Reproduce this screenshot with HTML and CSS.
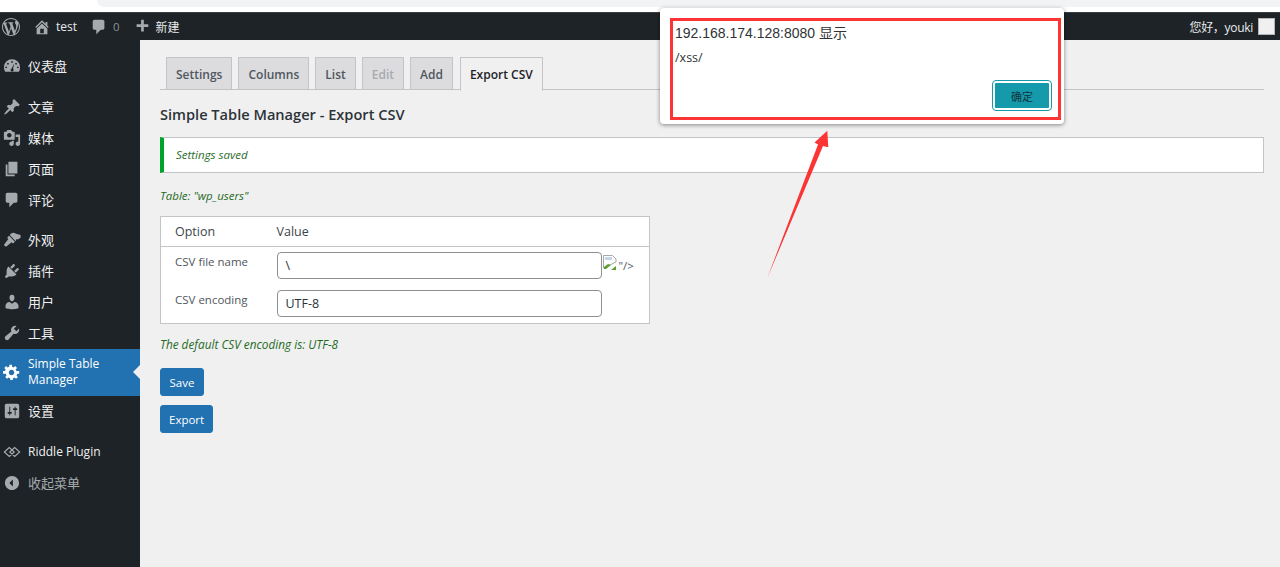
FILE: index.html
```html
<!DOCTYPE html>
<html lang="zh">
<head>
<meta charset="utf-8">
<title>Simple Table Manager - Export CSV</title>
<link rel="stylesheet" href="styles.css">
</head>
<body>
<div class="browser-strip"><div class="browser-tab"></div></div>
<header class="adminbar">
  <div class="bar-group">
    <svg class="wp-logo" viewBox="0 0 20 20"><path fill="#a7aaad" d="M20 10c0-5.510-4.490-10-10-10C4.480 0 0 4.490 0 10c0 5.520 4.480 10 10 10 5.510 0 10-4.480 10-10zM7.780 15.370L4.370 6.220c.55-.02 1.170-.08 1.170-.08.5-.06.44-1.130-.06-1.110 0 0-1.450.11-2.370.11-.18 0-.37 0-.58-.01C4.120 2.690 6.890 1 10 1c2.320 0 4.430.89 6.010 2.340-.68-.11-1.650.39-1.650 1.580 0 .74.45 1.360.9 2.100.35.61.55 1.360.55 2.460 0 1.490-1.400 5-1.400 5l-3.030-8.370c.54-.02.82-.17.82-.17.5-.05.44-1.250-.06-1.220 0 0-1.440.12-2.380.12-.87 0-2.330-.12-2.330-.12-.5-.03-.56 1.200-.06 1.220l.92.08 1.260 3.410zM17.410 10c.24-.64.74-1.870.43-4.250.7 1.290 1.050 2.710 1.050 4.250 0 3.290-1.730 6.240-4.400 7.780.97-2.590 1.940-5.200 2.920-7.780zM6.100 18.090C3.120 16.650 1.110 13.530 1.110 10c0-1.300.23-2.480.72-3.590C3.250 10.300 4.670 14.200 6.100 18.090zm4.030-6.630l2.580 6.980c-.86.29-1.760.45-2.710.45-.79 0-1.570-.11-2.290-.33.81-2.380 1.620-4.740 2.420-7.100z"/></svg>
    <svg class="bar-icon home" viewBox="0 0 20 20"><path fill="#a7aaad" d="M16 8.500l1.530 1.530-1.060 1.060L10 4.620l-6.470 6.470-1.060-1.060L10 2.500l4 4v-2h2v4zm-6-2.460l6 5.990V18H4v-5.970zM12 17v-5H8v5h4z"/></svg>
    <span class="bar-link">test</span>
    <svg class="bar-icon comment" viewBox="0 0 20 20"><path fill="#a7aaad" d="M5 2h9c1.100 0 2 .9 2 2v7c0 1.100-.9 2-2 2h-2l-5 5v-5H5c-1.100 0-2-.9-2-2V4c0-1.100.9-2 2-2z"/></svg>
    <span class="bar-count">0</span>
    <svg class="bar-icon plus" viewBox="0 0 20 20"><path fill="#a7aaad" d="M17 7v3h-5v5H9v-5H4V7h5V2h3v5h5z"/></svg>
    <span class="bar-link">新建</span>
  </div>
  <div class="bar-group">
    <span class="bar-link greet">您好，youki</span>
    <span class="avatar"></span>
  </div>
</header>
<div class="layout">
  <nav class="sidebar">
    <ul class="menu">
      <li class="item"><svg class="mi" viewBox="0 0 20 20"><path fill-rule="evenodd" d="M10 2.500a9 9 0 0 0-9 9c0 1.800.5 3.400 1.400 4.800h15.200a9 9 0 0 0 1.400-4.800 9 9 0 0 0-9-9zM10 4.500a1 1 0 1 1 0 2 1 1 0 0 1 0-2zM5.500 6.500a1 1 0 1 1 0 2 1 1 0 0 1 0-2zM14.500 6.500a1 1 0 1 1 0 2 1 1 0 0 1 0-2zM3.500 10.500a1 1 0 1 1 0 2 1 1 0 0 1 0-2zM16.500 10.500a1 1 0 1 1 0 2 1 1 0 0 1 0-2zM12.500 7l-1.300 6a1.700 1.700 0 1 1-1.500-.3z"/></svg><span>仪表盘</span></li>
      <li class="sep first"></li>
      <li class="item"><svg class="mi" viewBox="0 0 20 20"><path d="M10.440 3.020l1.820-1.820 6.360 6.350-1.830 1.820c-1.050-.68-2.480-.57-3.410.36l-.75.75c-.92.93-1.040 2.350-.35 3.400l-1.830 1.820-2.410-2.410-2.800 2.790c-.42.42-3.380 2.710-3.800 2.290s1.860-3.390 2.280-3.810l2.790-2.790L4.100 9.360l1.830-1.820c1.050.69 2.480.57 3.400-.36l.75-.75c.93-.92 1.050-2.350.36-3.410z"/></svg><span>文章</span></li>
      <li class="item"><svg class="mi" viewBox="0 0 20 20"><path d="M13 11V4c0-.55-.45-1-1-1h-1.670L9 1H5L3.670 3H2c-.55 0-1 .45-1 1v7c0 .55.45 1 1 1h10c.55 0 1-.45 1-1zM7 4.500c1.380 0 2.500 1.120 2.500 2.500S8.380 9.500 7 9.500 4.500 8.380 4.500 7 5.620 4.500 7 4.500zM14 6h5v10.500c0 1.380-1.120 2.500-2.500 2.500S14 17.880 14 16.500s1.120-2.500 2.500-2.500c.17 0 .34.020.5.050V9h-3V6zm-4 8.050V13h2v3.500c0 1.380-1.120 2.500-2.500 2.500S7 17.880 7 16.500 8.120 14 9.500 14c.17 0 .34.020.5.050z"/></svg><span>媒体</span></li>
      <li class="item"><svg class="mi" viewBox="0 0 20 20"><path d="M6 15V2h10v13H6zm-1 1h8v2H3V5h2v11z"/></svg><span>页面</span></li>
      <li class="item"><svg class="mi" viewBox="0 0 20 20"><path d="M5 2h9c1.100 0 2 .9 2 2v7c0 1.100-.9 2-2 2h-2l-5 5v-5H5c-1.100 0-2-.9-2-2V4c0-1.100.9-2 2-2z"/></svg><span>评论</span></li>
      <li class="sep"></li>
      <li class="item"><svg class="mi" viewBox="0 0 20 20"><path d="M19.500 4.500 14.500 3 12 2c-1.500-.3-3 .5-4.500 2.500l6.500 6.800 1-2.300 1.500.5 3-2zM6.800 5.200 5.200 6.800c-.4.4-.4 1 0 1.400l.8.800-4.300 5.500c-.6.800-.5 1.700.1 2.300s1.500.7 2.300.1L9.600 12.600l.8.800c.4.400 1 .4 1.400 0l1.400-1.400z"/></svg><span>外观</span></li>
      <li class="item"><svg class="mi" viewBox="0 0 20 20"><path d="M13.110 4.360L9.870 7.600 8 5.730l3.240-3.240c.35-.34 1.050-.2 1.560.32.52.51.66 1.210.31 1.550zm-8 1.770l.91-1.120 9.010 9.010-1.190.84c-.71.71-2.630 1.160-3.820 1.160H6.140L4.900 17.260c-.59.59-1.540.59-2.120 0-.59-.58-.59-1.530 0-2.120l1.240-1.240v-3.880c0-1.130.39-3.050 1.090-3.890zm7.260 3.970l3.240-3.240c.34-.35 1.040-.21 1.550.31.52.51.66 1.210.31 1.550l-3.240 3.250z"/></svg><span>插件</span></li>
      <li class="item"><svg class="mi" viewBox="0 0 20 20"><path d="M10 9.250c-2.270 0-2.730-3.440-2.730-3.440C7 4.020 7.820 2 9.970 2c2.160 0 2.980 2.020 2.710 3.810 0 0-.41 3.440-2.680 3.440zm0 2.570L12.720 10c2.390 0 4.520 2.330 4.520 4.530v2.490s-3.650 1.130-7.240 1.130c-3.650 0-7.240-1.130-7.240-1.130v-2.490c0-2.250 1.940-4.480 4.470-4.480z"/></svg><span>用户</span></li>
      <li class="item"><svg class="mi" viewBox="0 0 20 20"><path d="M16.680 9.770c-1.340 1.340-3.300 1.670-4.950.99l-5.410 6.520c-.99.99-2.590.99-3.570 0-.99-.98-.99-2.580 0-3.570l6.520-5.420c-.68-1.650-.35-3.610.99-4.950 1.280-1.280 3.120-1.620 4.720-1.060l-2.890 2.890 2.820 2.820 2.860-2.870c.53 1.580.18 3.410-1.090 4.670zM4.930 16.150c-.34-.34-.34-.89 0-1.230.34-.34.890-.34 1.230 0 .34.34.34.89 0 1.230-.34.34-.89.34-1.230 0z"/></svg><span>工具</span></li>
      <li class="item current"><svg class="mi gear" viewBox="0 0 20 20"><path d="M18 12h-2.180c-.17.7-.44 1.350-.81 1.930l1.540 1.540-2.100 2.100-1.540-1.540c-.58.36-1.230.64-1.910.81V19H8v-2.180c-.68-.17-1.330-.45-1.910-.81l-1.540 1.540-2.120-2.120 1.540-1.540c-.36-.58-.64-1.230-.81-1.910H0V9h2.180c.17-.68.44-1.330.81-1.910L1.450 5.550l2.120-2.120 1.540 1.540c.58-.37 1.230-.64 1.910-.81V2h3v2.180c.68.17 1.330.44 1.910.81l1.540-1.540 2.100 2.120-1.540 1.540c.37.58.64 1.230.81 1.910H18V12zm-8.500 1.500c1.660 0 3-1.340 3-3s-1.340-3-3-3-3 1.340-3 3 1.340 3 3 3z"/></svg><span class="latin">Simple Table Manager</span></li>
      <li class="item"><svg class="mi" viewBox="0 0 20 20"><path d="M18 16V4c0-1.100-.9-2-2-2H4c-1.100 0-2 .9-2 2v12c0 1.100.9 2 2 2h12c1.100 0 2-.9 2-2zM8 11h1c.55 0 1 .45 1 1s-.45 1-1 1H8v1.500c0 .28-.22.5-.5.5s-.5-.22-.5-.5V13H6c-.55 0-1-.45-1-1s.45-1 1-1h1V5.500c0-.28.22-.5.5-.5s.5.22.5.5V11zm5-2h-1c-.55 0-1-.45-1-1s.45-1 1-1h1V5.500c0-.28.22-.5.5-.5s.5.22.5.5V7h1c.55 0 1 .45 1 1s-.45 1-1 1h-1v5.500c0 .28-.22.5-.5.5s-.5-.22-.5-.5V9z"/></svg><span>设置</span></li>
      <li class="sep"></li>
      <li class="item"><svg class="mi riddle" viewBox="0 0 20 20"><path d="M7 5 1.500 10 7 15l5.500-5zM13 5 7.500 10l5.500 5 5.500-5z"/></svg><span class="latin">Riddle Plugin</span></li>
      <li class="item collapse"><svg class="mi" viewBox="0 0 20 20"><path d="M10 2.160c4.330 0 7.840 3.510 7.840 7.840s-3.510 7.840-7.840 7.840S2.160 14.330 2.160 10 5.670 2.160 10 2.160zM11 14V6l-4 4z"/></svg><span>收起菜单</span></li>
    </ul>
  </nav>
  <main class="content">
    <div class="tabs">
      <a class="tab">Settings</a>
      <a class="tab">Columns</a>
      <a class="tab">List</a>
      <a class="tab disabled">Edit</a>
      <a class="tab">Add</a>
      <a class="tab active">Export CSV</a>
    </div>
    <h1 class="title">Simple Table Manager - Export CSV</h1>
    <div class="notice">Settings saved</div>
    <p class="hint table-name">Table: "wp_users"</p>
    <table class="options">
      <thead><tr><th class="col-option">Option</th><th>Value</th></tr></thead>
      <tbody>
        <tr>
          <td class="label">CSV file name</td>
          <td class="value"><span class="field">\</span><svg class="broken" viewBox="0 0 16 16"><path fill="#fff" stroke="#a8a8a8" d="M.5.500h9l3.500 3.500v3l-12.500 6z"/><path fill="#c3d5ec" d="M2 2h7v3H2z"/><path fill="#5c9e31" d="M1 12l4-3 3 1-5 4H1z"/><path fill="#5c9e31" d="M8 15l5-4v4z"/></svg><span class="leftover">"/&gt;</span></td>
        </tr>
        <tr>
          <td class="label">CSV encoding</td>
          <td class="value"><span class="field">UTF-8</span></td>
        </tr>
      </tbody>
    </table>
    <p class="hint default-enc">The default CSV encoding is: UTF-8</p>
    <button class="btn save">Save</button>
    <button class="btn export">Export</button>
  </main>
</div>
<div class="dialog">
  <div class="dialog-origin">192.168.174.128:8080 显示</div>
  <div class="dialog-msg">/xss/</div>
  <button class="dialog-ok">确定</button>
</div>
<div class="red-box"></div>
<svg class="arrow" viewBox="0 0 80 160"><path fill="#fc3434" d="M7.300 153 58 19.500 54.500 17.500 67.300 5.700 68.300 22.300 63 21z"/></svg>
</body>
</html>
```
FILE: styles.css
```css
* { box-sizing: border-box; }
html, body { margin: 0; height: 567px; overflow: hidden; }
body { background: #f0f0f1; font-family: "Open Sans", "Noto Sans CJK SC", sans-serif; font-size: 13px; color: #3c434a; }

.browser-strip { height: 12px; background: #fff; padding-left: 97px; }
.browser-tab { height: 7px; background: #f1f3f4; border-bottom-left-radius: 8px; }

.adminbar { height: 28px; background: #1d2327; display: flex; justify-content: space-between; align-items: center; color: #f0f0f1; font-size: 12px; border-top: 1px solid #3a3d40; }
.bar-group { display: flex; align-items: center; }
.wp-logo { width: 18px; height: 18px; margin-left: 2px; margin-right: 13px; }
.bar-icon { width: 18px; height: 18px; }
.home { margin-right: 5px; }
.bar-link { color: #e8eaeb; }
.greet { letter-spacing: -.3px; }
.comment { margin-left: 13px; margin-right: 5px; }
.bar-count { color: #8c8f94; margin-right: 13px; font-size: 11.500px; }
.plus { margin-right: 5px; }
.avatar { width: 17px; height: 17px; background: #f0f0f1; border: 1px solid #b5b5b5; margin: 0 5px 0 5px; }

.layout { display: flex; height: 527px; }
.sidebar { width: 140px; flex: none; background: #1d2327; padding-top: 11px; }
.menu { list-style: none; margin: 0; padding: 0; }
.sep { height: 10px; }
.sep.first { height: 9.500px; }
.item { display: flex; align-items: center; min-height: 30.900px; color: #f0f0f1; font-size: 13px; line-height: 16px; padding-right: 8px; position: relative; }
.mi { width: 18px; height: 18px; margin: 0 7px 0 3px; flex: none; fill: #a7aaad; }
.gear { fill: #fff; }
.riddle { fill: none; stroke: #a7aaad; stroke-width: 1.300; }
.latin { font-size: 12px; }
.current { background: #2271b1; color: #fff; min-height: 47px; }
.current::after { content: ""; position: absolute; right: 0; top: 16px; border: 7px solid transparent; border-right-color: #f0f0f1; border-left-width: 0; }
.collapse { color: #a7aaad; }

.content { flex: 1; padding: 17px 16px 0 20px; min-width: 0; }
.tabs { display: flex; gap: 6px; padding-left: 6px; height: 33px; border-bottom: 1px solid #c3c4c7; }
.tab { height: 33px; padding: 1px 9px 0; display: flex; align-items: center; background: #dcdcde; border: 1px solid #c3c4c7; color: #50575e; font-weight: 600; font-size: 12px; }
.tab.disabled { color: #a7aaad; }
.tab.active { background: #f0f0f1; color: #1d2327; border-bottom-color: #f0f0f1; height: 34px; padding-top: 0; margin-left: 1px; }
.title { margin: 14px 0 13px; font-size: 14.600px; line-height: 20px; font-weight: 600; color: #2c3338; }
.notice { height: 36px; background: #fff; border: 1px solid #c3c4c7; border-left: 4px solid #00a32a; padding: 0 0 2px 12px; display: flex; align-items: center; font-style: italic; font-size: 11.500px; color: #2c6e2c; }
.hint { margin: 0; font-style: italic; font-size: 11.500px; line-height: 16px; color: #1e6b1e; }
.table-name { margin-top: 15px; }
.options { margin-top: 12px; width: 490px; height: 108px; border: 1px solid #c3c4c7; background: #fff; border-collapse: collapse; }
.options th { height: 30px; font-weight: 400; text-align: left; font-size: 12.500px; border-bottom: 1px solid #c3c4c7; color: #3c434a; padding: 0; }
.col-option { width: 116px; padding-left: 14px !important; }
.label { padding: 7px 0 0 14px; vertical-align: top; font-size: 11.500px; line-height: 16px; color: #50575e; }
.value { padding: 5px 0 0; vertical-align: top; display: flex; align-items: center; }
.field { display: block; width: 325px; height: 27px; line-height: 25px; border: 1px solid #8c8f94; border-radius: 4px; padding: 0 8px; font-size: 12.500px; color: #2c3338; background: #fff; }
.broken { width: 16px; height: 16px; margin-left: 1px; margin-top: -6px; }
.leftover { font-size: 11.500px; color: #50575e; }
.default-enc { margin-top: 12px; font-size: 11.800px; }
.btn { display: block; height: 28px; padding: 0 9px; background: #2271b1; border: 1px solid #2271b1; border-radius: 3px; color: #fff; font-family: inherit; font-size: 11.500px; }
.save { margin-top: 16px; padding: 0 8.500px; }
.export { margin-top: 9px; padding: 0 8px; }

.dialog { position: absolute; left: 660px; top: 8px; width: 404px; height: 116px; background: #fff; border-radius: 4px; box-shadow: 0 1px 4px rgba(0,0,0,.45); }
.dialog-origin { position: absolute; left: 15px; top: 16px; font-family: "Liberation Sans", "Noto Sans CJK SC", sans-serif; font-size: 14px; line-height: 18px; color: #303336; }
.dialog-msg { position: absolute; left: 15px; top: 42px; font-family: "Open Sans", sans-serif; font-size: 12.500px; line-height: 16px; color: #303336; }
.dialog-ok { position: absolute; left: 333px; top: 73px; width: 58px; height: 29px; padding: 0; background: #149aab; border: 2px solid #fff; outline: 1px solid #149aab; border-radius: 3px; font-family: "Noto Sans CJK SC", sans-serif; font-size: 11px; color: #11353c; }
.red-box { position: absolute; left: 670px; top: 18px; width: 391px; height: 102px; border: 3px solid #fc3434; pointer-events: none; }
.arrow { position: absolute; left: 760px; top: 125px; width: 80px; height: 160px; }
```
